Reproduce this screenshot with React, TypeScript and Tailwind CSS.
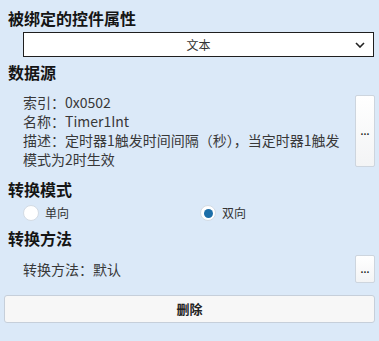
import React, { useState } from 'react';

const FONT = { fontFamily: '"Noto Sans CJK SC", "Noto Sans", sans-serif' };

const SectionTitle: React.FC<{ label: string; className?: string }> = ({ label, className = '' }) => (
  <h2 className={`text-[16px] leading-[22px] font-bold text-[#151515] ${className}`}>{label}</h2>
);

const DotsButton: React.FC<{ className?: string }> = ({ className = '' }) => (
  <button className={`w-[20px] flex-shrink-0 flex items-center justify-center rounded-[2px] border border-[#cdd5de] bg-gradient-to-b from-white to-[#f3f4f5] text-[9px] leading-none text-[#222] font-bold ${className}`}>
    ...
  </button>
);

const Radio: React.FC<{ label: string; checked: boolean; onClick: () => void }> = ({ label, checked, onClick }) => (
  <button onClick={onClick} className="flex items-center gap-[6px]">
    <span className="w-[16px] h-[16px] rounded-full bg-white border border-[#d3dbe4] flex items-center justify-center">
      {checked && <span className="w-[9px] h-[9px] rounded-full bg-[#1c6ea8]" />}
    </span>
    <span className="text-[12px] leading-[16px] text-[#333]">{label}</span>
  </button>
);

export default function App() {
  const [mode, setMode] = useState<'single' | 'double'>('double');

  return (
    <div className="w-[379px] h-[341px] bg-[#dbe9f8] overflow-hidden pt-[7px]" style={FONT}>
      <SectionTitle label="被绑定的控件属性" className="pl-[8px]" />

      {/* Select */}
      <div className="mt-[3px] ml-[23px] w-[351px] h-[25px] bg-white border border-[#1f1f1f] flex items-center relative">
        <span className="flex-1 text-center text-[12px] text-[#333]">文本</span>
        <svg className="absolute right-[8px] top-1/2 -translate-y-1/2" width="10" height="6" viewBox="0 0 10 6" fill="none">
          <path d="M1 1l4 4 4-4" stroke="#222" strokeWidth="1.6" />
        </svg>
      </div>

      <SectionTitle label="数据源" className="pl-[8px] mt-[4px]" />

      {/* Data source */}
      <div className="mt-[10px] pl-[23px] pr-[4px] flex items-center">
        <div className="w-[328px] text-[14px] leading-[19px] text-[#383838]">
          <p>索引：0x0502</p>
          <p>名称：Timer1Int</p>
          <p>描述：定时器1触发时间间隔（秒），当定时器1触发模式为2时生效</p>
        </div>
        <DotsButton className="h-[72px] ml-auto" />
      </div>

      <SectionTitle label="转换模式" className="pl-[8px] mt-[9px]" />

      <div className="mt-[5px] pl-[23px] flex items-center">
        <div className="w-[177px]">
          <Radio label="单向" checked={mode === 'single'} onClick={() => setMode('single')} />
        </div>
        <Radio label="双向" checked={mode === 'double'} onClick={() => setMode('double')} />
      </div>

      <SectionTitle label="转换方法" className="pl-[8px] mt-[6px]" />

      <div className="mt-[6px] pl-[23px] pr-[4px] flex items-center">
        <p className="flex-1 text-[14px] leading-[19px] text-[#383838]">转换方法：默认</p>
        <DotsButton className="h-[28px]" />
      </div>

      <div className="px-[4px] mt-[12px]">
        <button className="w-full h-[28px] rounded-[3px] border border-[#c6cfda] bg-[#f7f7f7] text-[13px] font-bold text-[#222]">
          删除
        </button>
      </div>
    </div>
  );
}
